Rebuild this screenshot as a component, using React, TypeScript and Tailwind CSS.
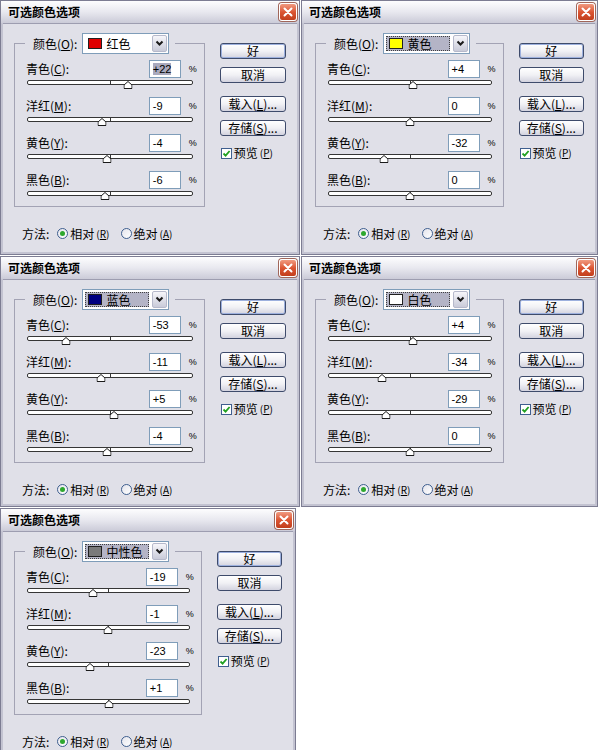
import React from 'react';

type Focus = 'input' | 'select';

type DialogData = {
  id: string;
  colorName: string;
  swatchClass: string;
  values: number[];
  focus: Focus;
  sizeClass: string;
};

const CHANNELS = [
  { name: '青色', key: 'C' },
  { name: '洋红', key: 'M' },
  { name: '黄色', key: 'Y' },
  { name: '黑色', key: 'B' },
];

const DIALOGS: DialogData[] = [
  { id: 'red', colorName: '红色', swatchClass: 'bg-[#e00000]', values: [22, -9, -4, -6], focus: 'input', sizeClass: 'w-[300px] h-[255px]' },
  { id: 'yellow', colorName: '黄色', swatchClass: 'bg-[#ffff00]', values: [4, 0, -32, 0], focus: 'select', sizeClass: 'w-[297px] h-[255px]' },
  { id: 'blue', colorName: '蓝色', swatchClass: 'bg-[#000080]', values: [-53, -11, 5, -4], focus: 'select', sizeClass: 'w-[300px] h-[251px]' },
  { id: 'white', colorName: '白色', swatchClass: 'bg-white', values: [4, -34, -29, 0], focus: 'select', sizeClass: 'w-[297px] h-[251px]' },
  { id: 'neutral', colorName: '中性色', swatchClass: 'bg-[#7a7a7a]', values: [-19, -1, -23, 1], focus: 'select', sizeClass: 'w-[296px] h-[260px]' },
];

const fmt = (v: number) => (v > 0 ? `+${v}` : `${v}`);

const CloseButton = () => (
  <div className="flex h-[18px] w-[18px] items-center justify-center rounded-[3px] border border-white bg-gradient-to-b from-[#f09a80] via-[#db5533] to-[#c23e1c] shadow-[0_0_0_1px_#a0665a]">
    <svg width="10" height="10" viewBox="0 0 10 10">
      <path d="M1.5 1.5 L8.5 8.5 M8.5 1.5 L1.5 8.5" stroke="white" strokeWidth="2" strokeLinecap="round" />
    </svg>
  </div>
);

const ColorSelect: React.FC<{ name: string; swatchClass: string; focused: boolean }> = ({ name, swatchClass, focused }) => (
  <div className="ml-[5px] flex h-[21px] w-[87px] items-center border border-[#7f9db9] bg-white py-[1px] pl-[2px] pr-[1px]">
    <div
      className={`mr-[3px] flex h-[15px] flex-1 items-center pl-[3px] ${
        focused ? 'bg-[#b4b4c6] outline-1 -outline-offset-1 outline-dotted outline-[#404040]' : ''
      }`}
    >
      <span className={`h-[11px] w-[14px] border border-[#202020] ${swatchClass}`} />
      <span className="ml-[4px] text-[12px] leading-[12px] text-black">{name}</span>
    </div>
    <div className="flex h-[17px] w-[15px] items-center justify-center rounded-[2px] border border-[#b6b9cb] bg-gradient-to-b from-[#f6f6fa] to-[#c9cbd9]">
      <svg width="9" height="7" viewBox="0 0 9 7">
        <path d="M1.5 1.5 L4.5 4.5 L7.5 1.5" fill="none" stroke="#1a1a1a" strokeWidth="2" />
      </svg>
    </div>
  </div>
);

const Thumb = () => (
  <svg width="9" height="8" viewBox="0 0 9 8">
    <polygon points="4.5,0.5 8.5,4 8.5,7.5 0.5,7.5 0.5,4" fill="white" stroke="#1a1a1a" strokeWidth="1" />
    <line x1="0.5" y1="7.5" x2="8.5" y2="7.5" stroke="#1a1a1a" strokeWidth="1" />
  </svg>
);

const SliderRow: React.FC<{ name: string; keyChar: string; value: number; selected: boolean }> = ({ name, keyChar, value, selected }) => (
  <div className="flex flex-col">
    <div className="flex h-[18px] items-center">
      <span className="flex-1 text-[12px] leading-[12px] text-black">
        {name}(<u>{keyChar}</u>):
      </span>
      <div className="flex h-[18px] w-[32px] items-center border border-[#7f9db9] bg-white pl-[3px]">
        <span className={`font-['Liberation_Sans',sans-serif] text-[11px] leading-[12px] text-black ${selected ? 'bg-[#a9a9bd]' : ''}`}>
          {fmt(value)}
        </span>
      </div>
      <span className="ml-[8px] w-[5px] font-['Liberation_Sans',sans-serif] text-[9px] leading-[10px] text-black">%</span>
    </div>
    <div className="relative mx-[1px] mt-[2px] h-[12px]">
      <div className="h-[5px] rounded-[2px] border border-[#363636] bg-white" />
      <div className="absolute left-1/2 top-0 h-[5px] w-px bg-[#363636]" />
      <div className="absolute top-[1px] -translate-x-1/2" style={{ left: `${50 + value / 2}%` }}>
        <Thumb />
      </div>
    </div>
  </div>
);

const XpButton: React.FC<{ primary?: boolean; className?: string; children: React.ReactNode }> = ({ primary, className, children }) => (
  <div
    className={`flex h-[16px] items-center justify-center rounded-[3px] border border-[#3e4b6b] bg-gradient-to-b from-white via-[#f1f1f5] to-[#d3d3df] text-[12px] leading-[12px] text-black ${
      primary ? 'shadow-[inset_0_0_0_1px_#9db0de]' : ''
    } ${className ?? ''}`}
  >
    {children}
  </div>
);

const Radio: React.FC<{ checked?: boolean; className?: string }> = ({ checked, className }) => (
  <span
    className={`flex h-[11px] w-[11px] items-center justify-center rounded-full border border-[#3f5f8f] bg-gradient-to-br from-[#e4e4ec] to-white ${className ?? ''}`}
  >
    {checked && <span className="h-[5px] w-[5px] rounded-full bg-[#2ea82e]" />}
  </span>
);

const Dialog: React.FC<{ data: DialogData }> = ({ data }) => (
  <div className={`flex shrink-0 flex-col overflow-hidden border border-[#7c7c92] bg-[#c3c3d1] ${data.sizeClass}`}>
    {/* title bar */}
    <div className="flex h-[22px] shrink-0 items-center justify-between bg-gradient-to-b from-[#fdfdfe] via-[#e8e8ef] to-[#cbcbd8] pl-[7px] pr-[2px]">
      <span className="text-[12px] font-bold leading-[12px] text-black">可选颜色选项</span>
      <CloseButton />
    </div>

    <div className="mx-[2px] mb-[2px] flex-1 border-t border-[#9d9db0] bg-[#e0e0e8] px-[11px] pt-[9px]">
      <div className="flex">
        <fieldset className="w-[193px] border border-[#a3a3b4]">
          <legend className="ml-[10px] pl-[8px] pr-[6px]">
            <div className="flex items-center">
              <span className="text-[12px] leading-[12px] text-black">
                颜色(<u>O</u>):
              </span>
              <ColorSelect name={data.colorName} swatchClass={data.swatchClass} focused={data.focus === 'select'} />
            </div>
          </legend>
          <div className="flex flex-col gap-[5px] pb-[3px] pl-[11px] pr-[10px] pt-[6px]">
            {CHANNELS.map((c, i) => (
              <SliderRow
                key={c.key}
                name={c.name}
                keyChar={c.key}
                value={data.values[i]}
                selected={data.focus === 'input' && i === 0}
              />
            ))}
          </div>
        </fieldset>

        <div className="ml-[15px] flex w-[67px] flex-col">
          <XpButton primary className="mt-[10px]">好</XpButton>
          <XpButton className="mt-[8px]">取消</XpButton>
          <XpButton className="mt-[13px]">
            载入(<u>L</u>)...
          </XpButton>
          <XpButton className="mt-[8px]">
            存储(<u>S</u>)...
          </XpButton>
          <div className="ml-[1px] mt-[11px] flex items-center">
            <span className="flex h-[11px] w-[11px] items-center justify-center border border-[#3f5f8f] bg-white">
              <svg width="9" height="9" viewBox="0 0 9 9">
                <path d="M1.5 4.5 L3.6 6.6 L7.6 2" fill="none" stroke="#21a121" strokeWidth="1.8" />
              </svg>
            </span>
            <span className="ml-[2px] text-[12px] leading-[12px] text-black">预览</span>
            <span className="ml-[2px] text-[10px] leading-[10px] text-black">
              (<u>P</u>)
            </span>
          </div>
        </div>
      </div>

      <div className="ml-[8px] mt-[20px] flex h-[13px] items-center text-[12px] leading-[12px] text-black">
        <span>方法:</span>
        <Radio checked className="ml-[8px]" />
        <span className="ml-[2px]">相对</span>
        <span className="ml-[2px] text-[10px] leading-[10px]">
          (<u>R</u>)
        </span>
        <Radio className="ml-[11px]" />
        <span className="ml-[2px]">绝对</span>
        <span className="ml-[2px] text-[10px] leading-[10px]">
          (<u>A</u>)
        </span>
      </div>
    </div>
  </div>
);

export default function App() {
  return (
    <div className="flex h-[750px] w-[600px] flex-col gap-[1px] overflow-hidden bg-white font-['Noto_Sans_CJK_SC','Liberation_Sans',sans-serif]">
      <div className="flex gap-[1px]">
        <Dialog data={DIALOGS[0]} />
        <Dialog data={DIALOGS[1]} />
      </div>
      <div className="flex gap-[1px]">
        <Dialog data={DIALOGS[2]} />
        <Dialog data={DIALOGS[3]} />
      </div>
      <div className="flex">
        <Dialog data={DIALOGS[4]} />
      </div>
    </div>
  );
}
